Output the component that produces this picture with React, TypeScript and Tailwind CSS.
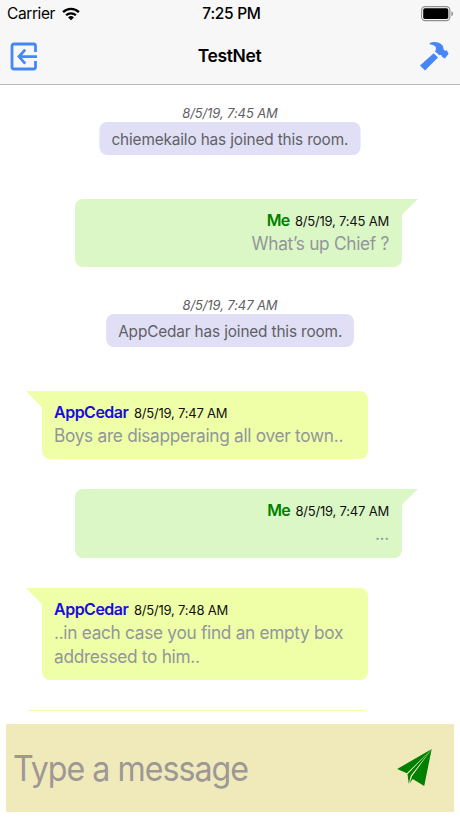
import clsx from "clsx";

type ChatItem =
  | { kind: "join"; time: string; user: string }
  | { kind: "mine" | "theirs"; time: string; user: string; lines: string[] };

const ITEMS: ChatItem[] = [
  { kind: "join", time: "8/5/19, 7:45 AM", user: "chiemekailo" },
  { kind: "mine", time: "8/5/19, 7:45 AM", user: "Me", lines: ["What’s up Chief ?"] },
  { kind: "join", time: "8/5/19, 7:47 AM", user: "AppCedar" },
  { kind: "theirs", time: "8/5/19, 7:47 AM", user: "AppCedar", lines: ["Boys are disapperaing all over town.."] },
  { kind: "mine", time: "8/5/19, 7:47 AM", user: "Me", lines: ["..."] },
  {
    kind: "theirs",
    time: "8/5/19, 7:48 AM",
    user: "AppCedar",
    lines: ["..in each case you find an empty box", "addressed to him.."],
  },
];

function WifiIcon() {
  return (
    <svg width="18" height="14" viewBox="0 0 18 14" fill="none" stroke="#000" strokeWidth="2.3">
      <path d="M1.1 5.1a11.2 11.2 0 0 1 15.8 0" />
      <path d="M4.1 8.3a7 7 0 0 1 9.8 0" />
      <path d="M9 13.3 6.1 10.4a4.1 4.1 0 0 1 5.8 0Z" fill="#000" stroke="none" />
    </svg>
  );
}

function BatteryIcon() {
  return (
    <svg width="33" height="16" viewBox="0 0 33 16">
      <rect x="0.6" y="0.6" width="28.3" height="14" rx="3.6" fill="none" stroke="#8f8f8d" strokeWidth="1.1" />
      <rect x="2.2" y="2.2" width="25.1" height="10.8" rx="1.8" />
      <path d="M30.4 5.2c2.2.8 2.2 4.2 0 5Z" fill="#8f8f8d" />
    </svg>
  );
}

function LeaveIcon() {
  return (
    <svg width="28" height="29" viewBox="0 0 28 29" fill="none" stroke="#4687f5" strokeWidth="2.8">
      <path d="M25.500 10V4a2 2 0 0 0-2-2H4a2 2 0 0 0-2 2v21a2 2 0 0 0 2 2h19.500a2 2 0 0 0 2-2v-6" />
      <path d="M27 14.600H9.500M15.200 7.600 9 14.600l6.200 7" />
    </svg>
  );
}

function HammerIcon() {
  return (
    <svg width="29" height="29" viewBox="0 0 29 29" fill="#4687f5">
      <path d="M9.800.900C13.500-.6 19.500-.2 22.300 3.200c1.500 1.700.7 3.900 1.900 5 .8.800 1.700.3 2.500.1l1.900 3.500-3.700 4.600-3.200-1.900c0-1.500-1.200-1.800-2.200-1.200l-4.500-3.800c1.500-2.200 1.400-4.600-.6-5.800-1.400-.9-2.800-1-4.600-1.200Z" />
      <path d="M13.700 11.300 18 15.500 5 28.500 0 23.600Z" />
    </svg>
  );
}

function SendIcon() {
  return (
    <svg width="36" height="38" viewBox="0 0 36 38" fill="#008000">
      <path d="M34.700 0 .2 20l9.600 4.300Z" />
      <path d="M34.700 0 10.500 25.200l1.300 9.800 1.900-8.200Z" />
      <path d="M34.700 0 15 27.300 12.700 34.500l3-4.400L27.200 37Z" />
    </svg>
  );
}

function JoinNotice({ time, user }: { time: string; user: string }) {
  return (
    <div className="mb-[43.5px] flex flex-col items-center">
      <div className="h-[17px] text-[13px] leading-[17px] tracking-[-0.1px] italic text-[#606064]">{time}</div>
      <div className="h-[33px] scale-x-[0.96] rounded-[8px] bg-[#e0dff5] px-[12.5px] text-[16px] leading-[34px] tracking-[-0.15px] whitespace-nowrap text-[#606066]">
        {user} has joined this room.
      </div>
    </div>
  );
}

function Bubble({ mine, time, user, lines }: { mine: boolean; time: string; user: string; lines: string[] }) {
  return (
    <div
      className={clsx(
        "relative mb-[29.9px] rounded-[8px] pt-[9px]",
        lines.length > 1 ? "pb-[11px]" : "pb-[11.8px]",
        mine
          ? "mr-[58px] ml-[75px] rounded-tr-none bg-[#dbf7c5] pr-[13px] pl-3 text-right"
          : "mr-[92px] ml-[42px] rounded-tl-none bg-[#eeffa7] px-3"
      )}
    >
      {/* tail */}
      <svg
        className={clsx("absolute top-0", mine ? "left-full" : "right-full")}
        width="16"
        height="17"
        viewBox="0 0 16 17"
        fill={mine ? "#dbf7c5" : "#eeffa7"}
      >
        <path d={mine ? "M0 0H16L3 12.500Q0 15 0 17Z" : "M16 0H0L16 16.500Z"} />
      </svg>
      <div className="h-6 leading-6 whitespace-nowrap">
        <span
          className={clsx(
            "text-[16px] font-semibold",
            mine ? "tracking-[-0.8px] text-[#008000]" : "tracking-[-0.5px] text-[#1a0be0]"
          )}
        >
          {user}
        </span>
        <span className="ml-[5.5px] text-[13px] tracking-[-0.2px] text-[#101010]">{time}</span>
      </div>
      {lines.map((line) => (
        <div
          key={line}
          className={clsx(
            "h-6 scale-x-[0.958] text-[18px] leading-6 tracking-[-0.3px] whitespace-nowrap text-[#92969a]",
            mine ? "origin-right" : "origin-left"
          )}
        >
          {line}
        </div>
      ))}
    </div>
  );
}

export default function App() {
  return (
    <div className="flex h-[818px] w-[460px] flex-col overflow-hidden bg-white font-['Inter','Liberation_Sans',sans-serif]">
      <header className="h-[85px] shrink-0 border-b border-[#b9b9b9] bg-[#f7f7f7]">
        <div className="grid h-7 grid-cols-[1fr_auto_1fr] items-center pr-[6px] pl-[7px] text-[15.5px] text-black">
          <div className="flex items-center gap-[7px]">
            <span className="tracking-[-0.4px]">Carrier</span>
            <WifiIcon />
          </div>
          <div className="pl-[2px] font-medium tracking-[-0.3px]">7:25 PM</div>
          <div className="flex justify-end">
            <BatteryIcon />
          </div>
        </div>
        <div className="grid h-14 grid-cols-[1fr_auto_1fr] items-center pr-[11px] pl-[10px]">
          <button>
            <LeaveIcon />
          </button>
          <h1 className="text-[17.5px] font-semibold tracking-[-0.35px] text-black">TestNet</h1>
          <button className="flex justify-end">
            <HammerIcon />
          </button>
        </div>
      </header>

      <main className="h-[627px] shrink-0 overflow-hidden pt-5">
        {ITEMS.map((item, i) =>
          item.kind === "join" ? (
            <JoinNotice key={i} time={item.time} user={item.user} />
          ) : (
            <Bubble key={i} mine={item.kind === "mine"} time={item.time} user={item.user} lines={item.lines} />
          )
        )}
        {/* top edge of the next bubble */}
        <div className="mr-24 ml-7 h-[1.4px] bg-[#eeffa7]" />
      </main>

      <footer className="mx-[6px] mt-3 flex h-[88px] shrink-0 items-center justify-between bg-[#f0eabb] pr-[21px] pl-[7px]">
        <input
          className="w-[300px] origin-left scale-x-[0.92] bg-transparent text-[35px] tracking-[-1.1px] outline-none placeholder:text-[#9d9795] placeholder:opacity-100"
          placeholder="Type a message"
        />
        <button>
          <SendIcon />
        </button>
      </footer>
    </div>
  );
}
